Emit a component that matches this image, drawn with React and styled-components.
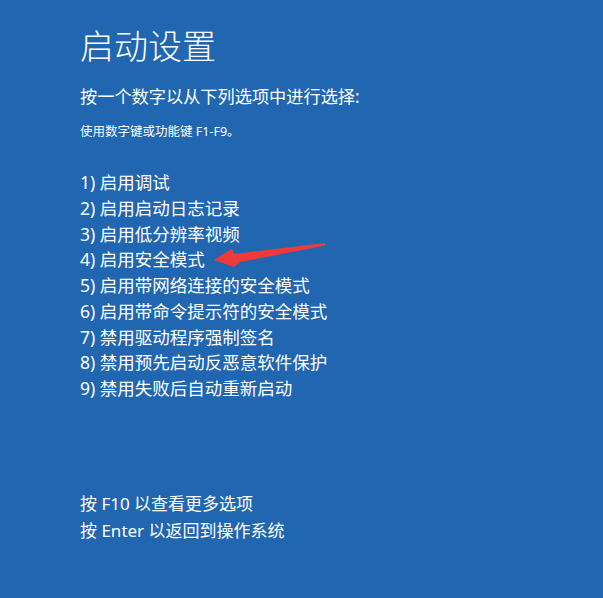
import React from 'react';
import styled, { createGlobalStyle } from 'styled-components';

const GlobalStyle = createGlobalStyle`
  html, body {
    margin: 0;
    padding: 0;
    background: #2066b0;
  }
  body {
    font-family: "Noto Sans", "Noto Sans CJK SC", sans-serif;
    color: #fff;
  }
`;

const Screen = styled.div`
  position: relative;
  width: 603px;
  height: 598px;
  box-sizing: border-box;
  padding: 24px 0 0 80px;
  background: #2066b0;
  overflow: hidden;
`;

const Title = styled.h1`
  margin: 0;
  font-size: 34px;
  line-height: 44px;
  font-weight: 300;
`;

const Prompt = styled.p`
  margin: 16px 0 0 0;
  font-size: 17.2px;
  line-height: 26px;
`;

const Hint = styled.p`
  margin: 13px 0 0 0;
  font-size: 12.5px;
  line-height: 18px;
`;

const Options = styled.ol`
  list-style: none;
  margin: 29px 0 0 0;
  padding: 0;
`;

const Option = styled.li`
  font-size: 17.5px;
  line-height: 25.75px;
  white-space: nowrap;
`;

const Footer = styled.div`
  margin-top: ${p => p.$gap}px;
  display: flex;
  flex-direction: column;
`;

const FooterLine = styled.span`
  font-size: 17px;
  line-height: 27px;
`;

const Arrow = styled.svg`
  position: absolute;
  left: 0;
  top: 0;
  width: 603px;
  height: 598px;
  pointer-events: none;
`;

const options = [
  '启用调试',
  '启用启动日志记录',
  '启用低分辨率视频',
  '启用安全模式',
  '启用带网络连接的安全模式',
  '启用带命令提示符的安全模式',
  '禁用驱动程序强制签名',
  '禁用预先启动反恶意软件保护',
  '禁用失败后自动重新启动',
];

export default function App() {
  return (
    <>
      <GlobalStyle />
      <Screen>
        <Title>启动设置</Title>
        <Prompt>按一个数字以从下列选项中进行选择:</Prompt>
        <Hint>使用数字键或功能键 F1-F9。</Hint>
        <Options>
          {options.map((text, i) => (
            <Option key={i}>{i + 1}) {text}</Option>
          ))}
        </Options>
        <Footer $gap={88}>
          <FooterLine>按 F10 以查看更多选项</FooterLine>
          <FooterLine>按 Enter 以返回到操作系统</FooterLine>
        </Footer>
        <Arrow viewBox="0 0 603 598">
          <polygon
            points="214,260 232,248.5 234,254 325,243 325,245.5 240,262 234,267"
            fill="#f03a3a"
          />
        </Arrow>
      </Screen>
    </>
  );
}
